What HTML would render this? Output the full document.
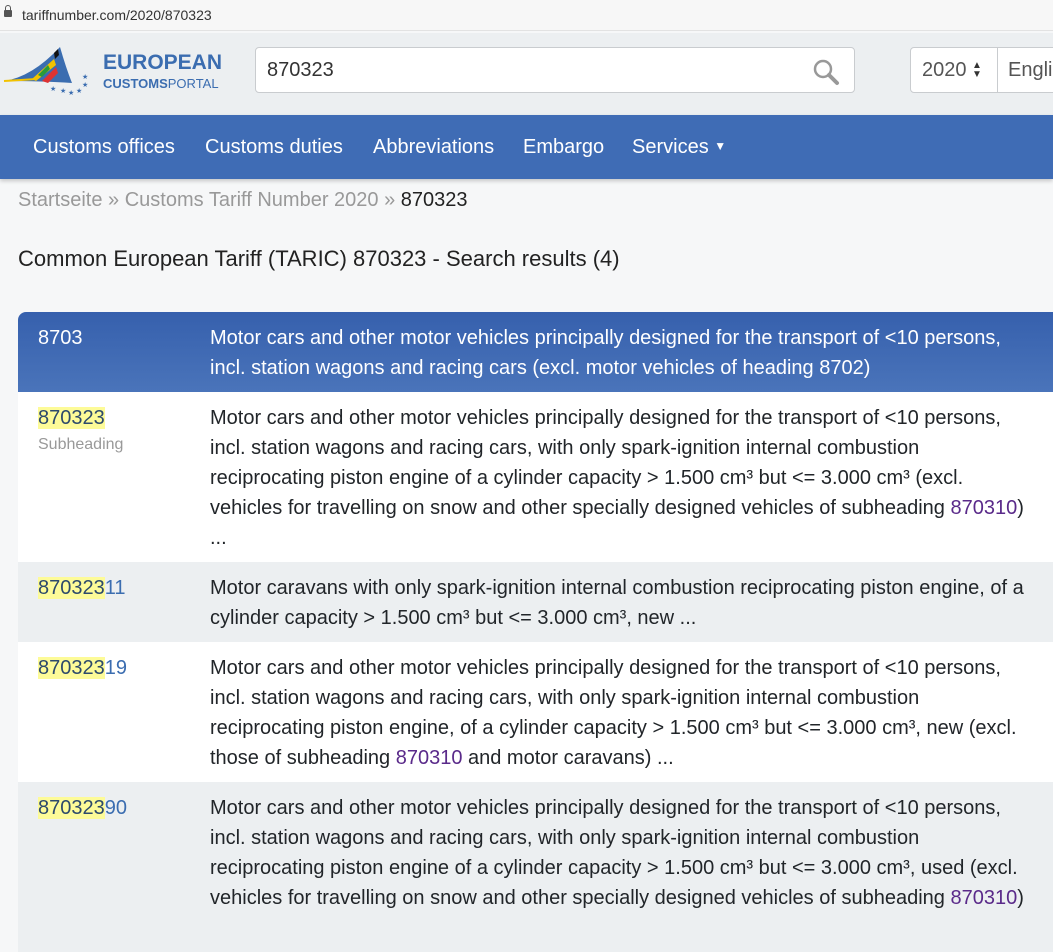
<!DOCTYPE html>
<html><head><meta charset="utf-8"><style>
*{margin:0;padding:0;box-sizing:border-box}
body{width:1053px;height:921px;overflow:hidden;background:#f6f7f8;font-family:"Liberation Sans",sans-serif;color:#212529;position:relative}
.url{position:absolute;left:0;top:0;width:1053px;height:31px;background:#f7f7f7;border-bottom:1px solid #e2e2e2;font-size:14px;color:#333;padding:7px 0 0 22px}
.url .lock{position:absolute;left:4px;top:10px;width:8px;height:7px;background:#555;border-radius:1px}
.url .lock:before{content:"";position:absolute;left:1px;top:-5px;width:4px;height:5px;border:1.5px solid #555;border-bottom:none;border-radius:3px 3px 0 0}
.hdr{position:absolute;top:33px;left:0;width:1053px;height:82px;background:#eceff1}
.brand1{position:absolute;left:103px;top:18px;font-weight:bold;font-size:21px;color:#3b6db0}
.brand2{position:absolute;left:103px;top:43px;font-size:13px;color:#3b6db0}
.search{position:absolute;left:255px;top:14px;width:600px;height:46px;background:#fff;border:1px solid #c9cccf;border-radius:4px;font-size:20px;padding:11px 0 0 11px;color:#333}
.sel{position:absolute;left:910px;top:14px;width:160px;height:46px;background:#fff;border:1px solid #c9cccf;border-radius:4px;font-size:20px;color:#555}
.nav{position:absolute;top:115px;left:0;width:1053px;height:64px;background:#3f6cb5;box-shadow:0 2px 4px rgba(0,0,0,.2)}
.nav span{position:absolute;top:21px;color:#fff;font-size:20px}
.crumb{position:absolute;left:18px;top:189px;font-size:20px;color:#999}
.crumb b{font-weight:normal;color:#222}
h1{position:absolute;left:18px;top:246px;font-size:22px;font-weight:normal;color:#222}
.tbl{position:absolute;left:18px;top:312px;width:1050px}
.row{position:relative;font-size:20px;line-height:30px;padding:11px 0 10px 0;white-space:nowrap}
.row .c{position:absolute;left:20px;top:11px}
.row .d{margin-left:192px}
.th{background:linear-gradient(#3660ad,#4a74ba);color:#fff;border-radius:8px 0 0 0;height:80px}
.w{background:#fff}.g{background:#eceff1}
.hl{background:#fdfb98;color:#2d4a6b}
.c a{color:#3b6db0}
.sub{font-size:16px;color:#999;line-height:24px}
.p{color:#5a2a8a}
</style></head><body>
<div class="url"><span class="lock"></span>tariffnumber.com/2020/870323</div>
<div class="hdr">
<svg style="position:absolute;left:2px;top:10px" width="92" height="55" viewBox="0 0 92 55">
<path d="M2 38 Q30 34 58 4 Q64 25 70 40 Q40 38 2 38Z" fill="#3b6db0"/>
<path d="M30 36 L52 16 L54 22 L34 38Z" fill="#f2c200"/>
<path d="M40 38 L54 24 L56 30 L46 40Z" fill="#d33"/>
<path d="M52 10 L56 6 L57 12 L53 16Z" fill="#111"/>
<path d="M36 32 L46 22 L48 26 L40 34Z" fill="#2a9a3a"/>
<path d="M2 38 Q20 37 34 36" stroke="#f2c200" stroke-width="2" fill="none"/>
<g fill="#3b6db0" font-size="7"><text x="58" y="50">★</text><text x="66" y="52">★</text><text x="74" y="50">★</text><text x="48" y="48">★</text><text x="80" y="44">★</text><text x="80" y="36">★</text></g>
</svg>
<div class="brand1">EUROPEAN</div>
<div class="brand2"><b>CUSTOMS</b>PORTAL</div>
<div class="search">870323
<svg style="position:absolute;right:14px;top:10px" width="28" height="28" viewBox="0 0 28 28"><circle cx="11" cy="11" r="8" stroke="#999" stroke-width="2.5" fill="none"/><path d="M17 17 L25 25" stroke="#999" stroke-width="4" stroke-linecap="round"/></svg></div>
<div class="sel"><span style="position:absolute;left:11px;top:11px">2020</span><span style="position:absolute;left:61px;top:13px;font-size:10px;line-height:9px;color:#333">▲<br>▼</span><span style="position:absolute;left:86px;top:0;height:44px;border-left:1px solid #c9cccf"></span><span style="position:absolute;left:97px;top:11px">English</span></div>
</div>
<div class="nav"><span style="left:33px">Customs offices</span><span style="left:205px">Customs duties</span><span style="left:373px">Abbreviations</span><span style="left:523px">Embargo</span><span style="left:632px">Services <span style="position:static;font-size:12px;vertical-align:3px">▼</span></span></div>
<div class="crumb">Startseite » Customs Tariff Number 2020 » <b>870323</b></div>
<h1>Common European Tariff (TARIC) 870323 - Search results (4)</h1>
<div class="tbl">
<div class="row th"><div class="c">8703</div><div class="d">Motor cars and other motor vehicles principally designed for the transport of &lt;10 persons,<br>incl. station wagons and racing cars (excl. motor vehicles of heading 8702)</div></div>
<div class="row w" style="height:170px"><div class="c"><span class="hl">870323</span><div class="sub">Subheading</div></div><div class="d">Motor cars and other motor vehicles principally designed for the transport of &lt;10 persons,<br>incl. station wagons and racing cars, with only spark-ignition internal combustion<br>reciprocating piston engine of a cylinder capacity &gt; 1.500 cm³ but &lt;= 3.000 cm³ (excl.<br>vehicles for travelling on snow and other specially designed vehicles of subheading <span class="p">870310</span>)<br>...</div></div>
<div class="row g" style="height:80px"><div class="c"><a><span class="hl">870323</span>11</a></div><div class="d">Motor caravans with only spark-ignition internal combustion reciprocating piston engine, of a<br>cylinder capacity &gt; 1.500 cm³ but &lt;= 3.000 cm³, new ...</div></div>
<div class="row w" style="height:140px"><div class="c"><a><span class="hl">870323</span>19</a></div><div class="d">Motor cars and other motor vehicles principally designed for the transport of &lt;10 persons,<br>incl. station wagons and racing cars, with only spark-ignition internal combustion<br>reciprocating piston engine, of a cylinder capacity &gt; 1.500 cm³ but &lt;= 3.000 cm³, new (excl.<br>those of subheading <span class="p">870310</span> and motor caravans) ...</div></div>
<div class="row g" style="height:170px"><div class="c"><a><span class="hl">870323</span>90</a></div><div class="d">Motor cars and other motor vehicles principally designed for the transport of &lt;10 persons,<br>incl. station wagons and racing cars, with only spark-ignition internal combustion<br>reciprocating piston engine of a cylinder capacity &gt; 1.500 cm³ but &lt;= 3.000 cm³, used (excl.<br>vehicles for travelling on snow and other specially designed vehicles of subheading <span class="p">870310</span>)</div></div>
</div>
</body></html>
